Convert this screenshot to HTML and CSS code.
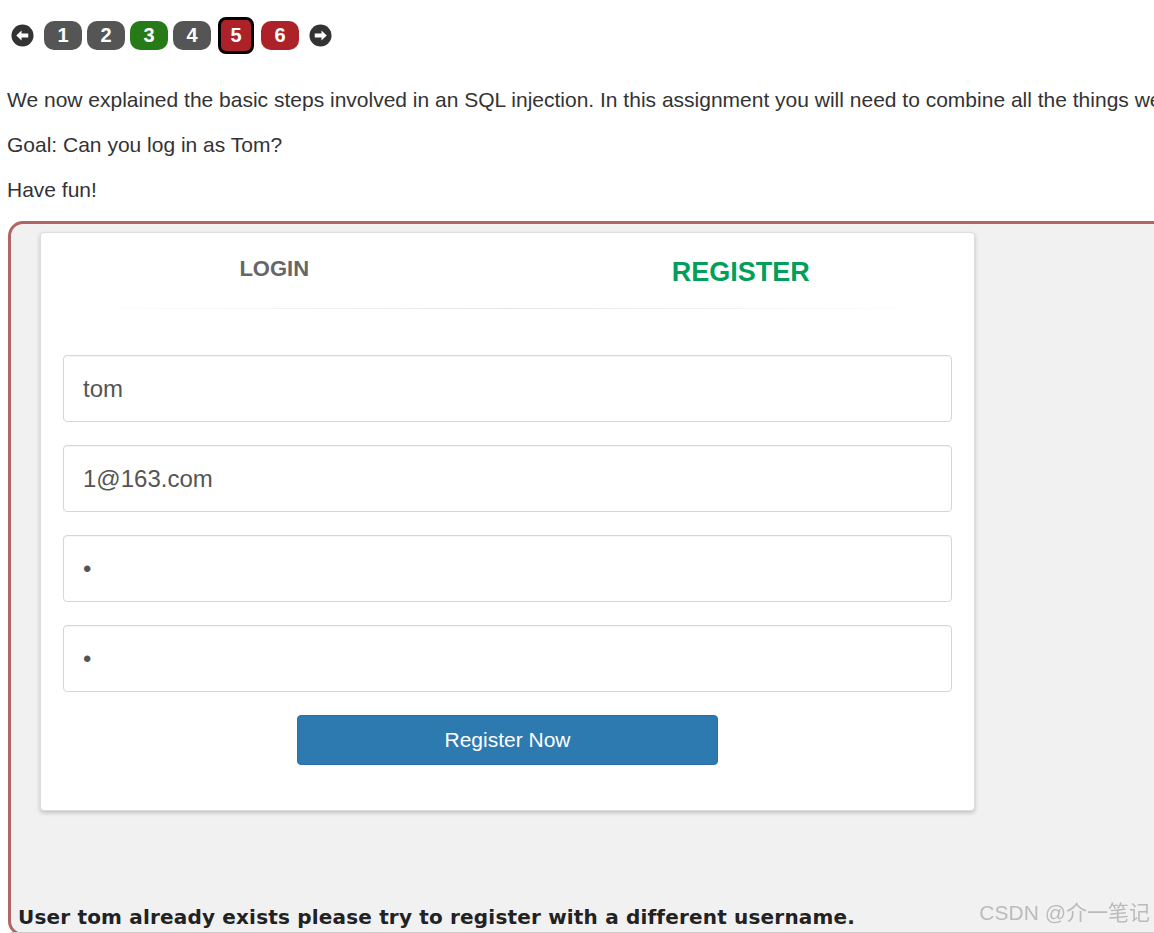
FILE: index.html
```html
<!DOCTYPE html>
<html lang="en">
<head>
    <meta charset="UTF-8">
    <meta name="viewport" content="width=device-width, initial-scale=1.0">
    <title>SQL Injection (advanced)</title>
    <link rel="stylesheet" href="styles.css">
</head>

<body>

    <div class="pager">
        <span class="arrow">
            <svg width="23" height="23" viewBox="0 0 24 24">
                <circle cx="12" cy="12" r="11.5" fill="#333"/>
                <path d="M5.5 12 L11 6.8 L11 10 L18 10 L18 14 L11 14 L11 17.2 Z" fill="#fff"/>
            </svg>
        </span>
        <span class="page">1</span>
        <span class="page">2</span>
        <span class="page done">3</span>
        <span class="page">4</span>
        <span class="page todo current">5</span>
        <span class="page todo">6</span>
        <span class="arrow next">
            <svg width="23" height="23" viewBox="0 0 24 24">
                <circle cx="12" cy="12" r="11.5" fill="#333"/>
                <path d="M18.5 12 L13 6.8 L13 10 L6 10 L6 14 L13 14 L13 17.2 Z" fill="#fff"/>
            </svg>
        </span>
    </div>

    <p class="wide">We now explained the basic steps involved in an SQL injection. In this assignment you will need to combine all the things we explained in the SQL lessons.</p>
    <p>Goal: Can you log in as Tom?</p>
    <p>Have fun!</p>

    <section class="attack">
        <div class="panel">
            <div class="tabs">
                <a class="tab">LOGIN</a>
                <a class="tab active">REGISTER</a>
            </div>
            <hr class="divider">
            <form id="register_form" class="form">
                <input class="field" type="text" name="username_reg" value="tom">
                <input class="field" type="email" name="email_reg" value="1@163.com">
                <input class="field" type="password" name="password_reg" value="a">
                <input class="field" type="password" name="confirm_password_reg" value="a">
                <button class="btn" type="submit">Register Now</button>
            </form>
        </div>
        <div class="feedback">User tom already exists please try to register with a different username.</div>
    </section>

    <div class="watermark">CSDN @介一笔记</div>

</body>

</html>
```

FILE: styles.css
```css
body {
    margin: 0;
    overflow: hidden;
    font-family: "Liberation Sans", Arial, sans-serif;
    color: #333;
    background: #fff;
}

.pager {
    display: flex;
    align-items: center;
    gap: 5px;
    height: 37px;
    margin-top: 17px;
    padding-left: 11px;
}

.arrow {
    display: flex;
    margin-right: 5px;
}

.arrow.next {
    margin-left: 5px;
    margin-right: 0;
}

.page {
    width: 38px;
    height: 29px;
    line-height: 29px;
    text-align: center;
    border-radius: 10px;
    background-color: #555;
    color: #fff;
    font-weight: bold;
    font-size: 20px;
    box-sizing: border-box;
}

.page.done {
    background-color: #267a17;
}

.page.todo {
    background-color: #ad2228;
}

.page.current {
    width: 36px;
    height: 37px;
    line-height: 31px;
    margin: 0 2px;
    border: 3px solid #000;
    border-radius: 8px;
}

p {
    font-size: 21px;
    line-height: 28px;
    margin: 0 0 17px;
    padding-left: 7px;
}

p.wide {
    margin-top: 32px;
    white-space: nowrap;
}

.attack {
    margin-left: 8px;
    width: 1300px;
    border: 3px solid #b36565;
    border-radius: 15px;
    background-color: #f1f1f1;
    padding-top: 8px;
}

.panel {
    margin-left: 29px;
    width: 935px;
    box-sizing: border-box;
    background: #fff;
    border: 1px solid #ddd;
    border-radius: 4px;
    box-shadow: 0 2px 4px rgba(0, 0, 0, 0.2);
    padding-bottom: 45px;
}

.tabs {
    display: flex;
    height: 75px;
}

.tab {
    flex: 1;
    text-align: center;
    font-weight: bold;
    line-height: 1;
    font-size: 22px;
    color: #666;
    padding-top: 25px;
}

.tab.active {
    font-size: 27px;
    color: #029f5b;
    padding-top: 26px;
}

.divider {
    border: 0;
    height: 1px;
    margin: 0 40px 46px;
    background-image: linear-gradient(to right, rgba(0, 0, 0, 0), rgba(0, 0, 0, 0.1), rgba(0, 0, 0, 0));
}

.form {
    display: flex;
    flex-direction: column;
    align-items: center;
    padding: 0 22px;
}

.field {
    width: 100%;
    height: 67px;
    box-sizing: border-box;
    margin: 0 0 23px;
    padding: 0 19px;
    border: 1px solid #d6d6d6;
    border-radius: 4px;
    box-shadow: inset 0 1px 1px rgba(0, 0, 0, 0.04);
    font-family: "Liberation Sans", Arial, sans-serif;
    font-size: 24px;
    color: #555;
    outline: none;
}

.btn {
    width: 421px;
    height: 50px;
    background-color: #2c7ab0;
    border: 1px solid #2e6da4;
    border-radius: 4px;
    color: #fff;
    font-family: "Liberation Sans", Arial, sans-serif;
    font-size: 21px;
}

.feedback {
    margin-top: 94px;
    padding: 0 7px 3px;
    line-height: 24px;
    font-family: "DejaVu Sans", sans-serif;
    font-size: 20px;
    font-weight: bold;
    letter-spacing: 0.18px;
    color: #222;
    border-bottom: 1px solid #ccc;
}

.watermark {
    position: fixed;
    right: 4px;
    bottom: 7px;
    font-family: "Liberation Sans", "Noto Sans CJK SC", sans-serif;
    font-size: 21px;
    color: #bbb;
}
```
